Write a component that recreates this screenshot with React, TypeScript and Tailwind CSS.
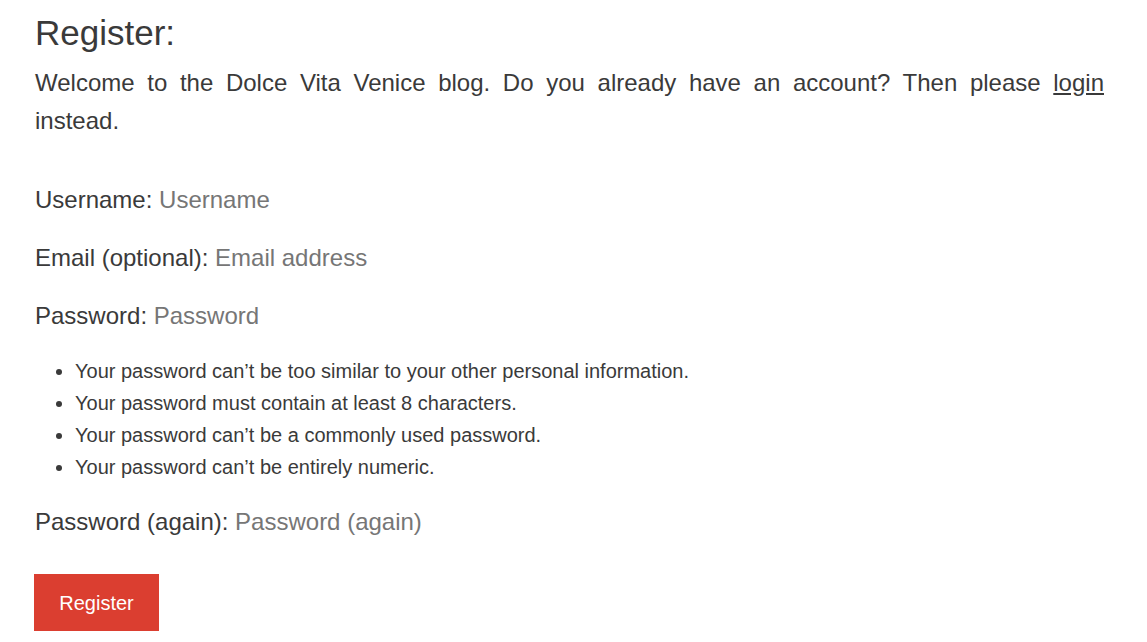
import React from "react";

function Field({ label, placeholder, type = "text" }: { label: string; placeholder: string; type?: string }) {
  return (
    <p className="flex items-baseline">
      <label className="whitespace-pre">{label} </label>
      <input
        type={type}
        placeholder={placeholder}
        className="flex-1 bg-transparent border-0 outline-none p-0 text-[24px] text-[#3a3a3a] placeholder:text-[#767676]"
        style={{ fontFamily: "inherit" }}
      />
    </p>
  );
}

export default function App() {
  return (
    <div
      className="bg-white min-h-[642px] pl-[35px] pr-[43px] text-[#3a3a3a]"
      style={{ fontFamily: '"Liberation Sans", Arial, sans-serif' }}
    >
      <h1 className="text-[35px] leading-[40px] pt-[13px]">Register:</h1>
      <p className="text-[24px] leading-[38px] text-justify mt-[11px]">
        Welcome to the Dolce Vita Venice blog. Do you already have an account? Then please{" "}
        <a href="#" className="underline text-[#3a3a3a]">login</a> instead.
      </p>
      <form className="mt-[41px] text-[24px] leading-[38px] flex flex-col">
        <Field label="Username:" placeholder="Username" />
        <div className="mt-[20px]">
          <Field label="Email (optional):" placeholder="Email address" />
        </div>
        <div className="mt-[20px]">
          <Field label="Password:" placeholder="Password" type="password" />
        </div>
        <ul className="list-disc pl-[40px] mt-[20px] text-[20px] leading-[32px]">
          <li>Your password can’t be too similar to your other personal information.</li>
          <li>Your password must contain at least 8 characters.</li>
          <li>Your password can’t be a commonly used password.</li>
          <li>Your password can’t be entirely numeric.</li>
        </ul>
        <div className="mt-[20px]">
          <Field label="Password (again):" placeholder="Password (again)" type="password" />
        </div>
        <div className="mt-[33px] -ml-px">
          <button
            type="submit"
            className="bg-[#db3e30] text-white text-[20px] w-[125px] h-[57px]"
          >
            Register
          </button>
        </div>
      </form>
    </div>
  );
}
